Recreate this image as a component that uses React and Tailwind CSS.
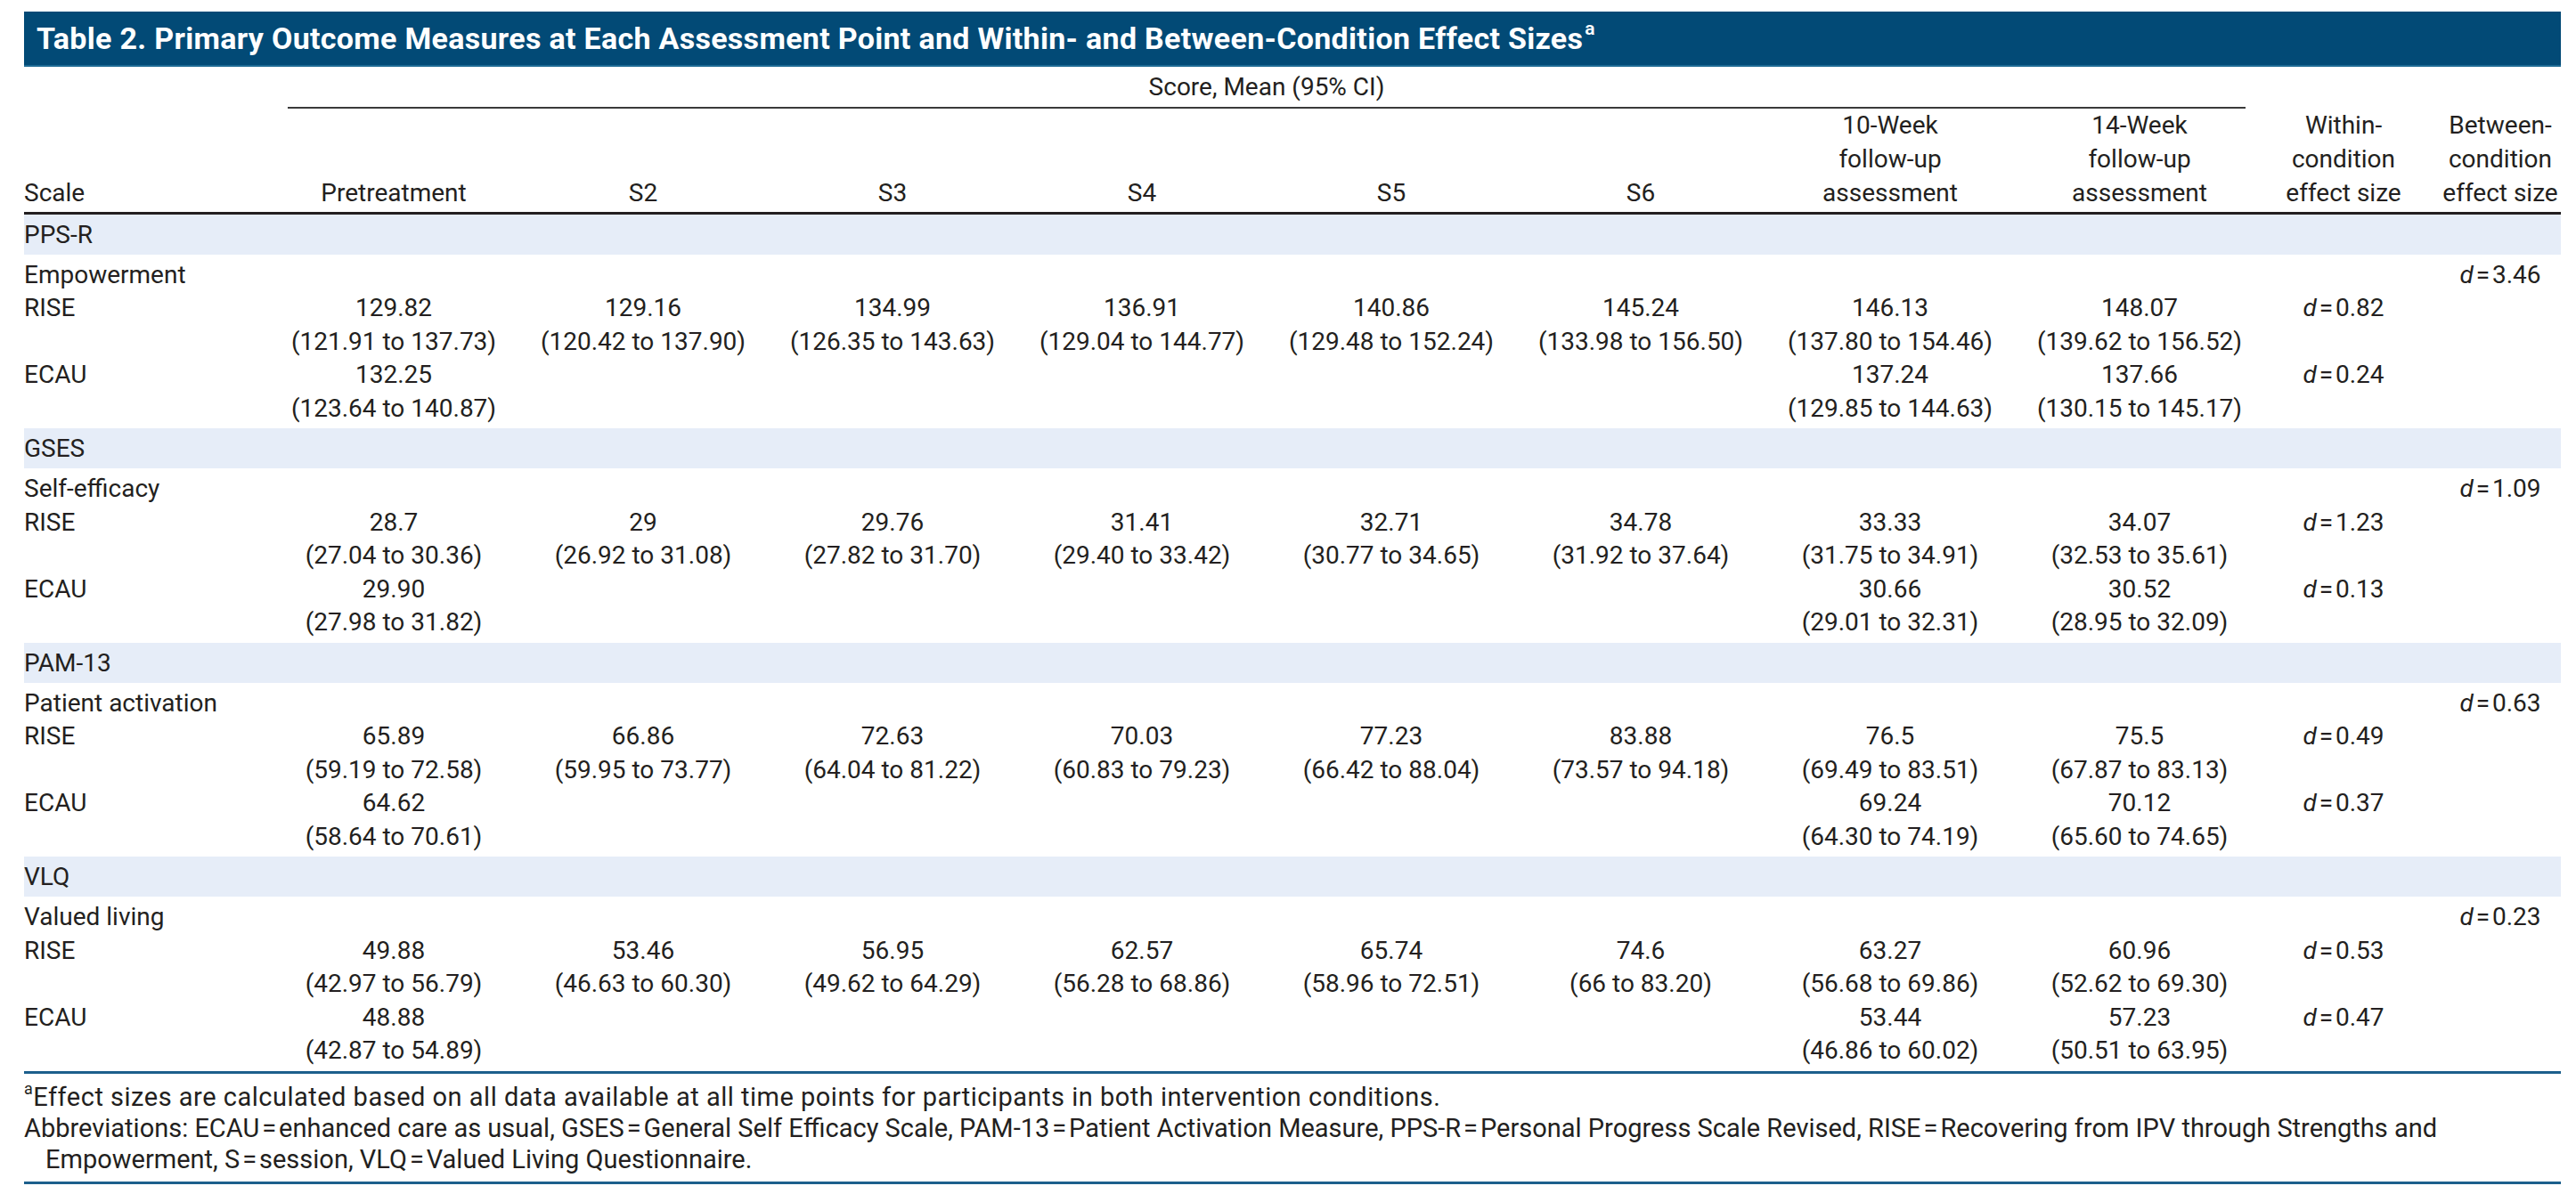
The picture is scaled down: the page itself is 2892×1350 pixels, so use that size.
import React from "react";

const GRID = "grid grid-cols-[275px_repeat(8,280px)_178px_155px]";

const sections = [
  {
    band: "PPS-R",
    label: "Empowerment",
    between: "3.46",
    rise: [
      ["129.82", "(121.91 to 137.73)"],
      ["129.16", "(120.42 to 137.90)"],
      ["134.99", "(126.35 to 143.63)"],
      ["136.91", "(129.04 to 144.77)"],
      ["140.86", "(129.48 to 152.24)"],
      ["145.24", "(133.98 to 156.50)"],
      ["146.13", "(137.80 to 154.46)"],
      ["148.07", "(139.62 to 156.52)"],
    ],
    riseD: "0.82",
    ecau: {
      pre: ["132.25", "(123.64 to 140.87)"],
      w10: ["137.24", "(129.85 to 144.63)"],
      w14: ["137.66", "(130.15 to 145.17)"],
    },
    ecauD: "0.24",
  },
  {
    band: "GSES",
    label: "Self-efficacy",
    between: "1.09",
    rise: [
      ["28.7", "(27.04 to 30.36)"],
      ["29", "(26.92 to 31.08)"],
      ["29.76", "(27.82 to 31.70)"],
      ["31.41", "(29.40 to 33.42)"],
      ["32.71", "(30.77 to 34.65)"],
      ["34.78", "(31.92 to 37.64)"],
      ["33.33", "(31.75 to 34.91)"],
      ["34.07", "(32.53 to 35.61)"],
    ],
    riseD: "1.23",
    ecau: {
      pre: ["29.90", "(27.98 to 31.82)"],
      w10: ["30.66", "(29.01 to 32.31)"],
      w14: ["30.52", "(28.95 to 32.09)"],
    },
    ecauD: "0.13",
  },
  {
    band: "PAM-13",
    label: "Patient activation",
    between: "0.63",
    rise: [
      ["65.89", "(59.19 to 72.58)"],
      ["66.86", "(59.95 to 73.77)"],
      ["72.63", "(64.04 to 81.22)"],
      ["70.03", "(60.83 to 79.23)"],
      ["77.23", "(66.42 to 88.04)"],
      ["83.88", "(73.57 to 94.18)"],
      ["76.5", "(69.49 to 83.51)"],
      ["75.5", "(67.87 to 83.13)"],
    ],
    riseD: "0.49",
    ecau: {
      pre: ["64.62", "(58.64 to 70.61)"],
      w10: ["69.24", "(64.30 to 74.19)"],
      w14: ["70.12", "(65.60 to 74.65)"],
    },
    ecauD: "0.37",
  },
  {
    band: "VLQ",
    label: "Valued living",
    between: "0.23",
    rise: [
      ["49.88", "(42.97 to 56.79)"],
      ["53.46", "(46.63 to 60.30)"],
      ["56.95", "(49.62 to 64.29)"],
      ["62.57", "(56.28 to 68.86)"],
      ["65.74", "(58.96 to 72.51)"],
      ["74.6", "(66 to 83.20)"],
      ["63.27", "(56.68 to 69.86)"],
      ["60.96", "(52.62 to 69.30)"],
    ],
    riseD: "0.53",
    ecau: {
      pre: ["48.88", "(42.87 to 54.89)"],
      w10: ["53.44", "(46.86 to 60.02)"],
      w14: ["57.23", "(50.51 to 63.95)"],
    },
    ecauD: "0.47",
  },
];

const EQ = "\u200a=\u200a";

function D({ v }) {
  return (
    <span>
      <i>d</i>
      {EQ}
      {v}
    </span>
  );
}

function Cell({ lines = [], left = false, between = false }) {
  return (
    <div className={between ? "pl-[19px]" : ""}>
      {lines.map((l, i) => (
        <div
          key={i}
          className={
            "h-[37.5px] leading-[37.5px] whitespace-nowrap " +
            (left ? "text-left" : "text-center")
          }
        >
          {l}
        </div>
      ))}
    </div>
  );
}

function Section({ s }) {
  const empty2 = ["", ""];
  const ecauCols = [s.ecau.pre, empty2, empty2, empty2, empty2, empty2, s.ecau.w10, s.ecau.w14];
  return (
    <div>
      <div className="h-[45px] bg-[#e6edf8] leading-[45px] whitespace-nowrap">{s.band}</div>
      <div className={GRID + " pt-[4px] pb-[4px]"}>
        <Cell left lines={[s.label]} />
        {Array.from({ length: 8 }).map((_, i) => (
          <Cell key={"l" + i} lines={[""]} />
        ))}
        <Cell lines={[""]} />
        <Cell between lines={[<D v={s.between} />]} />

        <Cell left lines={["RISE", ""]} />
        {s.rise.map((c, i) => (
          <Cell key={"r" + i} lines={c} />
        ))}
        <Cell lines={[<D v={s.riseD} />, ""]} />
        <Cell between lines={["", ""]} />

        <Cell left lines={["ECAU", ""]} />
        {ecauCols.map((c, i) => (
          <Cell key={"e" + i} lines={c} />
        ))}
        <Cell lines={[<D v={s.ecauD} />, ""]} />
        <Cell between lines={["", ""]} />
      </div>
    </div>
  );
}

export default function App() {
  const heads = [
    ["Pretreatment"],
    ["S2"],
    ["S3"],
    ["S4"],
    ["S5"],
    ["S6"],
    ["10-Week", "follow-up", "assessment"],
    ["14-Week", "follow-up", "assessment"],
  ];
  return (
    <div className="min-h-[1350px] bg-white pt-[13px] pl-[27px] font-['Roboto',sans-serif] text-[#231f20]">
      <div className="w-[2848px]">
        <div className="h-[62px] bg-[#024a76] border-b-2 border-[#1d6a94] flex items-center pl-[14px] text-white font-bold text-[34px] whitespace-nowrap tracking-[0.3px]">
          <span>
            Table 2. Primary Outcome Measures at Each Assessment Point and Within- and Between-Condition Effect Sizes
            <sup className="text-[21px] top-[-0.75em] ml-[2px] font-semibold">a</sup>
          </span>
        </div>

        <div className="flex items-end border-b-[3px] border-[#231f20] text-[28px] leading-[38px]">
          <div className="w-[275px] pb-[2px] whitespace-nowrap">Scale</div>
          <div className="w-[2240px] flex flex-col">
            <div className="mx-[21px] border-b-2 border-[#3a3a3a] pt-[4px] pb-[3px] text-center leading-[37.5px] whitespace-nowrap">
              Score, Mean (95% CI)
            </div>
            <div className="grid grid-cols-8 items-end pb-[2px]">
              {heads.map((h, i) => (
                <div key={i} className="text-center">
                  {h.map((l, j) => (
                    <div key={j} className="h-[38px] whitespace-nowrap">
                      {l}
                    </div>
                  ))}
                </div>
              ))}
            </div>
          </div>
          <div className="w-[178px] text-center pb-[2px]">
            <div className="h-[38px] whitespace-nowrap">Within-</div>
            <div className="h-[38px] whitespace-nowrap">condition</div>
            <div className="h-[38px] whitespace-nowrap">effect size</div>
          </div>
          <div className="w-[155px] pl-[19px] text-center pb-[2px]">
            <div className="h-[38px] whitespace-nowrap">Between-</div>
            <div className="h-[38px] whitespace-nowrap">condition</div>
            <div className="h-[38px] whitespace-nowrap">effect size</div>
          </div>
        </div>

        <div className="text-[28px]">
          {sections.map((s) => (
            <Section key={s.band} s={s} />
          ))}
        </div>

        <div className="h-[3px] bg-[#1c5f8c]" />
        <div className="pt-[9px] pb-[7px] text-[29px] leading-[35px]">
          <div className="whitespace-nowrap tracking-[0.5px]">
            <sup className="text-[18px] top-[-0.7em]">a</sup>Effect sizes are calculated based on all data available at all time points for participants in both intervention conditions.
          </div>
          <div className="whitespace-nowrap">
            Abbreviations: ECAU{EQ}enhanced care as usual, GSES{EQ}General Self Efficacy Scale, PAM-13{EQ}Patient Activation Measure, PPS-R{EQ}Personal Progress Scale Revised, RISE{EQ}Recovering from IPV through Strengths and
          </div>
          <div className="whitespace-nowrap pl-[24px]">
            Empowerment, S{EQ}session, VLQ{EQ}Valued Living Questionnaire.
          </div>
        </div>
        <div className="h-[3px] bg-[#1c5f8c]" />
      </div>
    </div>
  );
}
